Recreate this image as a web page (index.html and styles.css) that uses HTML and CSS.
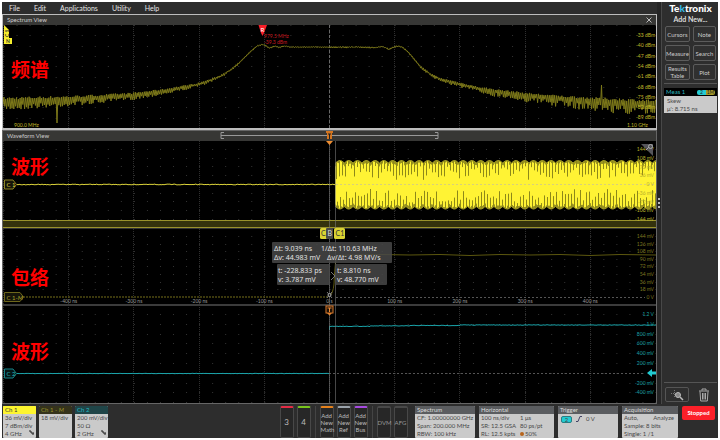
FILE: index.html
```html
<!DOCTYPE html>
<html lang="en">
<head>
<meta charset="utf-8">
<title>Oscilloscope</title>
<link rel="stylesheet" href="styles.css">
</head>
<body>
<div class="app">
  <div class="workspace">
    <main class="views">
      <nav class="menu">
        <button>File</button><button>Edit</button><button>Applications</button><button>Utility</button><button>Help</button>
      </nav>
      <section class="panel panel-active">
        <header class="panel-head"><span>Spectrum View</span>
          <button class="close" aria-label="Close"><svg viewBox="0 0 6 6"><path d="M.5.5l5 5M5.5.5l-5 5"/></svg></button>
        </header>
        <svg class="plot" viewBox="3 25 653 103">
          <g id="spectrum-grid"></g>
          <path class="center" d="M329.5 25V128"/>
          <path id="spectrum-trace" class="olive"/>
          <g id="spectrum-labels" class="axis yellow"></g>
          <path d="M4 25L9 30V38H4Z" fill="#f7ef2d"/><rect x="4" y="38" width="8" height="6" fill="#f7ef2d"/>
          <text class="tag-text" transform="translate(9 37) rotate(-90)">C 1</text>
          <text class="tag-text" x="6" y="43">N</text>
          <path d="M258.500 25h8.500l-3 8-1.500 3-1.500-3z" fill="#fa1e28"/>
          <text x="262.500" y="32" class="marker-r">R</text>
          <text class="marker-text" x="264" y="38">979.5 MHz</text>
          <text class="marker-text" x="264" y="44">-39.3 dBm</text>
          <text class="axis yellow" x="14" y="127">900.0 MHz</text>
          <text class="axis yellow" x="627" y="127">1.10 GHz</text>
          <text class="caption" x="11" y="77">频谱</text>
        </svg>
      </section>
      <section class="panel">
        <header class="panel-head"><span>Waveform View</span>
          <svg class="range" viewBox="3 131 653 10">
            <path d="M224 132.500h-3v6h3M435 132.500h3v6h-3M221 135.500H438" fill="none" stroke="#999"/>
            <path d="M326 131h7v2h-1v6h-5v-6h-1z" fill="#d4751f"/>
            <path d="M328 134h3M329.500 134v5" stroke="#222" fill="none"/>
          </svg>
        </header>
        <svg class="plot" viewBox="3 141 653 262">
          <g id="wave-grid"></g>
          <path d="M3 305H656" stroke="#3b3b3b" stroke-width="2"/>
          <rect x="3" y="220" width="653" height="8" fill="#34320d"/>
          <path d="M3 220.500H656M3 227.500H656" stroke="#99922c"/>
          <path d="M3 228.500H656" stroke="#333"/>
          <path class="zero" d="M336 297.500H645M17 373.500H645"/>
          <path id="c1-line" stroke="#ddd43a" fill="none"/>
          <path id="burst-dark" stroke="#999321" fill="none"/>
          <path id="burst-light" stroke="#fff334" fill="none"/>
          <path id="burst-notch" stroke="#8d8819" fill="none"/>
          <path d="M336 184.500H656" stroke="#d8cf7a" stroke-dasharray="2 2"/>
          <path d="M23 297H329" stroke="#77701b" stroke-dasharray="2 1"/>
          <path d="M329 297Q333 294 334 284Q335 256 338 255.500L350 255L380 254.500L410 255L440 254.500L470 255.500L500 254.500L530 255L560 254.500L590 255.500L620 254.500L656 255" class="olive envelope"/>
          <path id="c2-line" stroke="#1aa4aa" fill="none"/>
          <path d="M329.500 141V403M335.500 141V403" class="cursor"/>
          <g id="wave-labels" class="axis"></g>
          <g id="time-labels" class="axis time"></g>
          <path d="M641 144H653V156Z" fill="#55555a"/>
          <path d="M646 150l3-3" stroke="#aaa"/><circle cx="650.500" cy="146.500" r="2" fill="none" stroke="#aaa"/>
          <path d="M326 141h7l-3.500 4z" fill="#ee8e32"/>
          <path d="M4.500 180H13l3.500 4.500-3.500 4.500H4.500Z" fill="#16150a" stroke="#8e8624"/>
          <text class="channel" x="6.500" y="187" fill="#ddd43a">C 1</text>
          <path d="M4.500 292.500H20l3.500 4.500-3.500 4.500H4.500Z" fill="#16150a" stroke="#6d661b"/>
          <text class="channel" x="6.500" y="299.500" fill="#aaa22a">C 1-<tspan font-style="italic">M</tspan></text>
          <path d="M4.500 369H13l3.500 4.500-3.500 4.500H4.500Z" fill="#041616" stroke="#168489"/>
          <text class="channel" x="6.500" y="376" fill="#27b8be">C 2</text>
          <rect x="320" y="228" width="10" height="11" rx="1.500" fill="#dbd333"/>
          <rect x="326" y="228" width="7" height="11" rx="1" fill="#4a4a48"/>
          <rect x="334" y="228" width="11" height="11" rx="1.500" fill="#dbd333"/>
          <text class="badge" x="321" y="236">C</text><text class="badge light" x="327.500" y="236">B</text><text class="badge" x="335.500" y="236">C1</text>
          <rect class="readout" x="272" y="242" width="120" height="21" rx="1"/>
          <rect class="readout" x="277" y="264" width="53" height="21" rx="1"/>
          <rect class="readout" x="335" y="264" width="52" height="21" rx="1"/>
          <g class="readout-text">
            <text x="274" y="251">Δt: 9.039 ns</text><text x="321" y="251">1/Δt: 110.63 MHz</text>
            <text x="274" y="260">Δv: 44.983 mV</text><text x="327" y="260">Δv/Δt: 4.98 MV/s</text>
            <text x="278" y="273">t: -228.833 ps</text><text x="278" y="282">v: 3.787 mV</text>
            <text x="337" y="273">t: 8.810 ns</text><text x="337" y="282">v: 48.770 mV</text>
          </g>
          <path d="M327 292l5 6M332 292l-5 6M331 272l4 4-4 4" stroke="#777" fill="none"/><circle cx="329.500" cy="295" r="1.500" fill="#222" stroke="#aaa"/>
          <rect x="326" y="306" width="7" height="7" fill="#1c1208" stroke="#d9792b"/>
          <path d="M327.500 308h4M329.500 308v4" stroke="#ed8b38"/><path d="M327 313h5l-2.500 2.500z" fill="#e5832e"/>
          <path d="M647 373l5-4v2.500h4v3h-4v2.500z" fill="#22cbd2"/>
          <text class="caption" x="11" y="174">波形</text>
          <text class="caption" x="11" y="285">包络</text>
          <text class="caption" x="11" y="359">波形</text>
        </svg>
      </section>
    </main>
    <div class="grip"><i></i><i></i><i></i></div>
    <aside class="side">
      <div class="logo">Te<span class="k">k</span>tronix</div>
      <div class="add">Add New...</div>
      <div class="tools">
        <button>Cursors</button><button>Note</button><button>Measure</button><button>Search</button><button>Results<br>Table</button><button>Plot</button>
      </div>
      <div class="meas">
        <div class="meas-head"><span>Meas 1</span><span class="pair"><b>2</b><b>1M</b></span></div>
        <div class="meas-body">Skew<br>μ': 8.715 ns</div>
      </div>
      <div class="side-foot">
        <button class="zoom" aria-label="Zoom"><svg viewBox="0 0 14 12"><path d="M1 4.500h7M4.500 1v8" stroke="#777" stroke-dasharray="1 1"/><circle cx="8" cy="6" r="2.500" fill="#888" stroke="#bbb"/><path d="M10 8l3 3" stroke="#bbb" stroke-width="1.500"/></svg></button>
        <button class="trash" aria-label="Delete"><svg viewBox="0 0 12 14"><path d="M1 3h10M4 2.500V1h4v1.500M2 3.500l.7 9.500h6.600L10 3.500M4.500 5v6.500M6 5v6.500M7.500 5v6.500" fill="none" stroke="#aaa"/></svg></button>
      </div>
    </aside>
  </div>
  <footer class="bar">
    <div class="channels">
      <div class="card ch1"><h3>Ch 1</h3><p>36 mV/div<br>7 dBm/div<br>4 GHz</p><svg viewBox="0 0 5 5"><path d="M0 1h2v2h3M3 4h2" /></svg></div>
      <div class="card chm"><h3>Ch 1 - <i>M</i></h3><p>18 mV/div</p></div>
      <div class="card ch2"><h3>Ch 2</h3><p>200 mV/div<br>50 Ω<br>2 GHz</p><svg viewBox="0 0 5 5"><path d="M0 1h2v2h3M3 4h2" /></svg></div>
    </div>
    <div class="adders">
      <div class="group"><button class="red num">3</button><button class="green num">4</button></div>
      <div class="group"><button class="orange">Add<br>New<br>Math</button><button class="gray">Add<br>New<br>Ref</button><button class="purple">Add<br>New<br>Bus</button></div>
      <div class="group"><button class="dim">DVM</button><button class="dim">AFG</button></div>
    </div>
    <div class="settings">
      <div class="card"><h3>Spectrum</h3><p>CF: 1.00000000 GHz<br>Span: 200.000 MHz<br>RBW: 100 kHz</p></div>
      <div class="card wide"><h3>Horizontal</h3><div class="cols"><p>100 ns/div<br>SR: 12.5 GSA<br>RL: 12.5 kpts</p><p>1 μs<br>80 ps/pt<br><span class="dot"></span>50%</p></div></div>
      <div class="card"><h3>Trigger</h3><div class="trig"><b>2</b><svg viewBox="0 0 6 6"><path d="M0 5.500h2L4 .5h2"/></svg><span>0 V</span></div></div>
      <div class="card acq"><h3>Acquisition</h3><p><span class="split"><span>Auto,</span><span>Analyze</span></span>Sample: 8 bits<br>Single: 1 /1</p></div>
      <button class="stopped">Stopped</button>
    </div>
  </footer>
</div>
<script src="plots.js"></script>
</body>
</html>
```
FILE: styles.css
```css
* { box-sizing: border-box; }
body { margin: 0; padding: 2px; background: #fff; color: #ddd; font: 7px/8px Lato, "Noto Sans", "Noto Sans CJK SC", sans-serif; }
button { margin: 0; padding: 0; border: 0; background: none; color: inherit; font: inherit; }
h3, p { margin: 0; font-weight: 400; }
.app { background: #2d2d2d; }
.workspace { display: flex; }
.views { flex: 1; min-width: 0; }
.menu { display: flex; gap: 14px; height: 12px; padding-left: 7px; align-items: center; color: #e4e4e4; }
.panel { border: 1px solid #666; background: #000; }
.panel-active { border-color: #bdbdbd; border-bottom-width: 2px; }
.panel-head { position: relative; display: flex; justify-content: space-between; align-items: center; height: 10px; padding: 0 4px; background: #373735; color: #ccc; font-size: 6px; }
.close svg { display: block; width: 6px; height: 6px; stroke: #bbb; fill: none; }
.range { position: absolute; inset: 0; width: 100%; height: 100%; }
.plot { display: block; width: 100%; height: auto; }
.grid-line { stroke: #2e2e2e; stroke-dasharray: 1 1; }
.grid-dots { stroke: #343434; stroke-dasharray: 1 12.040; }
.center { stroke: #686868; stroke-dasharray: 3 2; }
.zero { stroke: #555; stroke-dasharray: 2 2; }
.olive { fill: none; stroke: #7e7a1a; }
.envelope { stroke: #5c570f; }
.cursor { stroke: #777; stroke-opacity: .6; stroke-width: 1; }
.axis { font-size: 5px; fill: #aaa; }
.yellow { fill: #c0b928; }
.time { text-anchor: middle; fill: #999; }
.end { text-anchor: end; }
.tag-text { font-size: 5px; font-weight: 700; fill: #333; }
.marker-r { font-size: 6px; fill: #fff; text-anchor: middle; }
.marker-text { font-size: 5px; fill: #c91c22; }
.caption { font: 700 19px "Noto Sans CJK SC", sans-serif; fill: #f00; }
.channel { font-size: 6px; }
.badge { font-size: 7px; fill: #333; }
.light { fill: #ddd; }
.readout { fill: #484848; fill-opacity: .85; }
.readout-text { font-family: "Noto Sans", sans-serif; font-size: 7px; fill: #e2e2e2; }
.grip { width: 5px; display: flex; flex-direction: column; align-items: center; justify-content: center; gap: 2px; border-right: 1px solid #484848; background: #252525; }
.grip i { width: 2px; height: 2px; background: #bbb; }
.side { width: 56px; display: flex; flex-direction: column; padding: 0 1px 0 2px; background: #2e2e2e; }
.logo { height: 12px; text-align: center; color: #fff; font-weight: 900; font-size: 10px; line-height: 12px; }
.k { color: #35b7e4; }
.add { height: 12px; padding-top: 1px; text-align: center; font-weight: 700; font-size: 7px; }
.tools { display: grid; grid-template-columns: 1fr 1fr; gap: 3px; padding: 0 1px 3px; border-bottom: 1px solid #555; }
.tools button { height: 16px; border: 1px solid #5c5c5c; border-radius: 2px; background: #303030; font-size: 6px; line-height: 7px; color: #ccc; }
.meas { margin-top: 4px; }
.meas-head { display: flex; justify-content: space-between; align-items: center; height: 8px; padding: 0 2px; background: #000; color: #28b6bb; font-size: 6px; }
.pair { display: flex; font-size: 5px; line-height: 5px; color: #222; }
.pair b { width: 9px; border-radius: 2px 0 0 2px; background: #24cbd2; text-align: center; font-weight: 400; }
.pair b + b { border-radius: 0 2px 2px 0; background: #a79a27; }
.meas-body { height: 17px; padding: 1px 3px; background: #cacaca; color: #484848; font-size: 6px; }
.side-foot { margin-top: auto; display: flex; justify-content: space-between; align-items: center; padding: 4px 7px 2px 1px; border-top: 1px solid #555; }
.zoom { width: 24px; height: 15px; border: 1px solid #555; border-radius: 2px; }
.zoom svg { display: block; width: 14px; height: 12px; margin: auto; fill: none; }
.trash svg { display: block; width: 12px; height: 14px; }
.bar { display: flex; justify-content: space-between; height: 34px; padding: 2px 3px 0 1px; }
.channels { display: flex; gap: 3px; }
.settings { display: flex; gap: 4px; }
.card { position: relative; width: 33px; background: #cacaca; color: #484848; font-size: 6px; line-height: 8px; border-radius: 1px; overflow: hidden; white-space: nowrap; }
.card h3 { height: 8px; padding-left: 2px; background: #5b5d60; color: #ddd; font-size: 6px; line-height: 8px; }
.card p { padding-left: 2px; }
.card > svg { position: absolute; right: 2px; bottom: 3px; width: 5px; height: 5px; fill: none; stroke: #222; }
.card.ch1 h3 { background: #fdf52f; color: #333; }
.card.chm h3 { background: #35331b; color: #9b932b; }
.card.ch2 h3 { background: #1f4548; color: #24bcc2; }
.adders { display: flex; margin-left: 164px; }
.group { display: flex; gap: 3px; padding: 0 4px; border-left: 1px solid #444; }
.group:first-child { border-left: 0; }
.group button { display: flex; flex-direction: column; align-items: center; width: 14px; height: 32px; padding: 2px 0; border: 1px solid #484848; border-radius: 2px; background: #272727; color: #bbb; font-size: 6px; line-height: 7px; }
.group button { display: block; text-align: center; border-top: 2px solid #777; }
.group .num { font-size: 8px; }
.group .red { border-top-color: #e42c45; }
.group .green { border-top-color: #78c51c; }
.group .orange { border-top-color: #e6821c; }
.group .gray { border-top-color: #9ba3ab; }
.group .purple { border-top-color: #a74be0; }
.group .dim { border-top-color: #484848; color: #999; }
.settings .card { width: 60px; }
.settings .wide { width: 75px; }
.settings .acq { width: 56px; }
.cols { display: grid; grid-template-columns: 39px 1fr; }
.dot { display: inline-block; width: 4px; height: 4px; margin-right: 1px; border-radius: 2px; background: #b8651d; }
.trig { display: flex; align-items: center; gap: 4px; padding: 1px 3px; }
.trig b { width: 11px; border: 1px solid #287d83; border-radius: 2px; background: #23cbd2; text-align: center; font-weight: 400; line-height: 5px; }
.trig svg { width: 6px; height: 6px; fill: none; stroke: #446; }
.split { display: flex; justify-content: space-between; padding-right: 4px; }
.stopped { width: 33px; height: 14px; border-radius: 2px; background: #fc2029; color: #fff; font-size: 6px; font-weight: 700; }
```
FILE: plots.js
```js
const NS = 'http://www.w3.org/2000/svg';
const el = id => document.getElementById(id);
const STEP = 13.04, MID = 329.5;

function add(parent, tag, attrs, text) {
  const node = document.createElementNS(NS, tag);
  for (const key in attrs) node.setAttribute(key, attrs[key]);
  if (text) node.textContent = text;
  parent.appendChild(node);
}

// Repeatable noise in the range 0..1
let seed = 7;
function rand() {
  seed = (seed * 16807) % 2147483647;
  return seed / 2147483647;
}

function grid(group, top, bottom, rows) {
  for (let i = -5; i < 5; i++) {
    const x = Math.round(MID - .5 + i * STEP * 5) + .5;
    add(group, 'path', { class: 'grid-line', d: `M${x} ${top}V${bottom}` });
  }
  rows.forEach(y => add(group, 'path', { class: 'grid-dots', d: `M${MID - 25 * STEP} ${Math.round(y) + .5}H656` }));
}

const series = (from, step, n) => Array.from({ length: n }, (_, i) => from + i * step);
grid(el('spectrum-grid'), 25, 128, series(25, 10.3, 10));
grid(el('wave-grid'), 141, 403, [
  ...series(149, 8.7, 9), ...series(236, 7.6, 8), ...series(314, 9.8, 10)
]);

// Spectrum baseline, interpolated between points
const base = [[3,102.5],[68,100],[100,98],[133,95.500],[165,91],[198,84.5],[210,80.5],[220,76.5],[232,69],[240,62],[250,52],[257,46],[262,44.5],[265,45],[269,48],[275,46],[279,47.5],[284,46],[290,47],[360,47],[375,47.5],[382,46.5],[389,49],[396,46],[401,46.500],[405,49],[410,54],[420,66],[430,74],[440,79],[460,84],[480,89],[500,92],[530,96],[560,99],[600,102],[656,105]];
function level(x) {
  let i = 1;
  while (base[i][0] < x) i++;
  const [x0, y0] = base[i - 1], [x1, y1] = base[i];
  return y0 + (y1 - y0) * (x - x0) / (x1 - x0);
}
let d = '';
for (let x = 3, i = 0; x <= 656; x += .9, i++) {
  const dist = Math.abs(x - MID);
  const amp = dist < 90 ? .5 : Math.pow((dist - 80) / 246, .9) * 5 + .5;
  let y = level(x) + (i % 2 ? -amp * (.5 + rand() * .5) : amp * (.4 + rand() * (x > MID ? 1.8 : 1.1)));
  if (Math.abs(x - 57) < .46) y = 123;
  if (Math.abs(x - 601.5) < .46) y = 85;
  d += `${d ? 'L' : 'M'}${x.toFixed(1)} ${y.toFixed(1)}`;
}
el('spectrum-trace').setAttribute('d', d);

[-33, -40, -47, -54, -61, -68, -75, -82, -89].forEach((v, i) =>
  add(el('spectrum-labels'), 'text', { class: 'end', x: 655, y: 37 + i * 10.3 }, `${v} dBm`));

// Vertical scales of the three waveform slices
const scales = [
  ['#b8b02a', 151, 8.75, ['144 mV', '108 mV', '72 mV', '36 mV', '0 V', '-36 mV', '-72 mV', '-108 mV', '-144 mV']],
  ['#7b741e', 238, 7.6, ['144 mV', '126 mV', '108 mV', '90 mV', '72 mV', '54 mV', '36 mV', '18 mV', '0 V']],
  ['#1ba0a5', 316, 9.8, ['1.2 V', '1 V', '800 mV', '600 mV', '400 mV', '200 mV', '', '-200 mV', '-400 mV']]
];
scales.forEach(([fill, y, step, names]) => names.forEach((name, i) =>
  add(el('wave-labels'), 'text', { class: 'end', x: 654, y: y + i * step, fill }, name)));
[-400, -300, -200, -100, 0, 100, 200, 300, 400].forEach(v =>
  add(el('time-labels'), 'text', { x: MID + v * .652, y: 303 }, v ? `${v} ns` : '0 s'));

function flat(from, to, y, noise) {
  let path = `M${from} ${y}`;
  for (let x = from + 1; x <= to; x++) path += `L${x} ${(y + (rand() - .5) * noise).toFixed(2)}`;
  return path;
}
el('c1-line').setAttribute('d', flat(17, 335, 184.5, .8));
el('c2-line').setAttribute('d', flat(17, 329, 373.5, .4) + 'M329.500 330V326' + flat(330, 370, 326.3, .5) + flat(370, 410, 325.9, .5) + flat(410, 460, 325.5, .5) + flat(460, 656, 325, .6));

// Carrier burst: one column per pixel, with beat ripples on both edges
let dark = '', light = '', notch = '';
for (let x = 335.5, i = 0; x < 656; x++, i++) {
  const ripple = Math.abs(Math.sin(i * Math.PI / 8.8)) * 2.5;
  const top = 162.5 - ripple, bottom = 207 + ripple;
  dark += `M${x} ${top.toFixed(1)}V${bottom.toFixed(1)}`;
  light += `M${x} ${(top + 1 + rand() * 3).toFixed(1)}V${(bottom - 1 - rand() * 3).toFixed(1)}`;
  if (i % 3 === 1) notch += `M${x} ${(top + 1).toFixed(1)}V${(top + 6 + rand() * 12).toFixed(1)}`;
  if (i % 3 === 2) notch += `M${x} ${(bottom - 1).toFixed(1)}V${(bottom - 6 - rand() * 13).toFixed(1)}`;
}
el('burst-dark').setAttribute('d', dark);
el('burst-light').setAttribute('d', light);
el('burst-notch').setAttribute('d', notch);
```
